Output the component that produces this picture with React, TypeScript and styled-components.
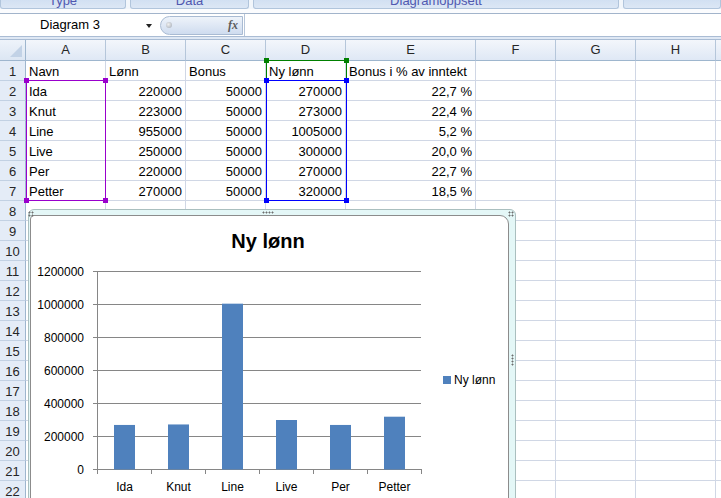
import React from 'react';
import styled, { createGlobalStyle } from 'styled-components';

const Global = createGlobalStyle`
  html, body { margin: 0; padding: 0; background: #fff; overflow: hidden; }
  body { width: 721px; height: 498px; font-family: "Liberation Sans", Arial, sans-serif; }
`;

const Page = styled.div`
  position: relative;
  width: 721px;
  height: 498px;
  overflow: hidden;
  background: #fff;
`;

/* ---------- ribbon remnant ---------- */
const Ribbon = styled.div`
  display: flex;
  gap: 4px;
  height: 9px;
  background: #f2f6fb;
`;

const RibbonGroup = styled.div<{ $w?: number }>`
  ${(p) => (p.$w ? `width: ${p.$w}px;` : 'flex: 1;')}
  box-sizing: border-box;
  height: 9px;
  overflow: hidden;
  background: linear-gradient(#d2e0f2, #dce7f5);
  border: 1px solid #b1c5dc;
  border-top: none;
  border-radius: 0 0 3px 3px;
  text-align: center;
  color: #5058b0;
  font-size: 13px;
`;

const RibbonLabel = styled.div`
  margin-top: -6px;
  line-height: 14px;
`;

const RibbonFoot = styled.div`
  height: 4px;
  background: #fbfcfe;
  border-bottom: 1px solid #a2b4cb;
`;

/* ---------- formula bar ---------- */
const FormulaBar = styled.div`
  display: flex;
  align-items: center;
  height: 22px;
  background: #fff;
  border-bottom: 1px solid #aabcd4;
`;

const NameBox = styled.div`
  position: relative;
  width: 156px;
  height: 22px;
  box-sizing: border-box;
  padding-left: 40px;
  font-size: 13px;
  line-height: 22px;
  color: #000;
`;

const DropArrow = styled.span`
  position: absolute;
  left: 146px;
  top: 10px;
  width: 0;
  height: 0;
  border-left: 3.5px solid transparent;
  border-right: 3.5px solid transparent;
  border-top: 4px solid #222;
`;

const FxPill = styled.div`
  position: relative;
  margin-left: 4px;
  width: 83px;
  height: 19px;
  box-sizing: border-box;
  border: 1px solid #a9bbd3;
  border-radius: 10px 0 0 10px;
  background: linear-gradient(#eef3fa, #cfdcef);
  display: flex;
  align-items: center;
  justify-content: space-between;
  padding: 0 4px 0 5px;
`;

const FxDot = styled.span`
  width: 6px;
  height: 6px;
  border-radius: 50%;
  background: radial-gradient(circle at 40% 40%, #f0f0f0, #a0a8b4);
`;

const FxText = styled.span`
  font-family: "Liberation Serif", "Times New Roman", serif;
  font-style: italic;
  font-weight: bold;
  font-size: 12px;
  color: #5d5d5d;
`;

const FormulaInput = styled.div`
  flex: 1;
  height: 22px;
  border-left: 1px solid #b7c6da;
  margin-left: 1px;
`;

const HeaderGap = styled.div`
  height: 2px;
  background: #dfe8f4;
  border-bottom: 1px solid #a9bcd4;
`;

/* ---------- sheet ---------- */
const Sheet = styled.div`
  display: grid;
  grid-template-columns: 26px 80px 80px 80px 80px 130px 80px 80px 80px 80px;
  grid-auto-rows: 20px;
  grid-template-rows: 21px;
  font-size: 13px;
`;

const Corner = styled.div`
  position: relative;
  box-sizing: border-box;
  background: linear-gradient(#eef3fa, #dce6f3);
  border-right: 1px solid #9eb6ce;
  border-bottom: 1px solid #9eb6ce;
  &::after {
    content: '';
    position: absolute;
    right: 3px;
    bottom: 3px;
    width: 0;
    height: 0;
    border-left: 12px solid transparent;
    border-bottom: 12px solid #c2d2e6;
  }
`;

const ColHead = styled.div`
  box-sizing: border-box;
  background: linear-gradient(#f3f6fb, #dfe8f5);
  border-right: 1px solid #b5c6da;
  border-bottom: 1px solid #9eb6ce;
  text-align: center;
  line-height: 20px;
  color: #262626;
`;

const RowHead = styled.div`
  box-sizing: border-box;
  background: #e4ecf7;
  border-right: 1px solid #9eb6ce;
  border-bottom: 1px solid #c2d1e3;
  text-align: center;
  line-height: 20px;
  padding-top: 1px;
  color: #262626;
`;

const Cell = styled.div<{ $right?: boolean }>`
  box-sizing: border-box;
  border-right: 1px solid #d0d7e5;
  border-bottom: 1px solid #d0d7e5;
  line-height: 20px;
  padding: 1px ${(p) => (p.$right ? '3px' : '2px')} 0 ${(p) => (p.$right ? '2px' : '3px')};
  text-align: ${(p) => (p.$right ? 'right' : 'left')};
  white-space: nowrap;
  overflow: visible;
  color: #000;
`;

/* ---------- range highlights (overlays) ---------- */
const RangeBox = styled.div<{ $c: string; $x: number; $y: number; $w: number; $h: number }>`
  position: absolute;
  left: ${(p) => p.$x}px;
  top: ${(p) => p.$y}px;
  width: ${(p) => p.$w}px;
  height: ${(p) => p.$h}px;
  box-sizing: border-box;
  border: 1px solid ${(p) => p.$c};
  pointer-events: none;
`;

const Handle = styled.span<{ $c: string; $pos: string }>`
  position: absolute;
  width: 5px;
  height: 5px;
  background: ${(p) => p.$c};
  ${(p) => (p.$pos.includes('t') ? 'top: -3px;' : 'bottom: -3px;')}
  ${(p) => (p.$pos.includes('l') ? 'left: -3px;' : 'right: -3px;')}
`;

/* ---------- chart ---------- */
const ChartFrame = styled.div`
  position: absolute;
  left: 28px;
  top: 209px;
  width: 488px;
  height: 310px;
  box-sizing: border-box;
  background: #e4f7f7;
  border: 1px solid #aabfbf;
  border-radius: 6px;
  padding: 5px 6px 0 1px;
`;

const ChartInner = styled.div`
  height: 100%;
  box-sizing: border-box;
  background: #fff;
  border: 1px solid #8c8c8c;
  border-radius: 4px 9px 0 0;
  display: flex;
  flex-direction: column;
`;

const ChartTitle = styled.div`
  margin-top: 13px;
  text-align: center;
  font-weight: bold;
  font-size: 20px;
  line-height: 24px;
  color: #000;
  padding-right: 3px;
`;

const ChartBody = styled.div`
  display: flex;
  align-items: flex-start;
`;

const Legend = styled.div`
  margin-left: 9px;
  margin-top: 119px;
  display: flex;
  align-items: center;
  gap: 3px;
  font-size: 12px;
  line-height: 16px;
  color: #000;
`;

const LegendKey = styled.span`
  width: 8px;
  height: 8px;
  background: #4f81bd;
`;

const Grip = styled.span<{ $x: number; $y: number; $w: number; $h: number }>`
  position: absolute;
  left: ${(p) => p.$x}px;
  top: ${(p) => p.$y}px;
  width: ${(p) => p.$w}px;
  height: ${(p) => p.$h}px;
  background-image: radial-gradient(circle, #6e6e6e 0.9px, transparent 1.1px);
  background-size: 3px 3px;
`;

const cols = ['A', 'B', 'C', 'D', 'E', 'F', 'G', 'H', ''];

type Row = [string, string, string, string, string];
const data: Row[] = [
  ['Navn', 'Lønn', 'Bonus', 'Ny lønn', 'Bonus i % av inntekt'],
  ['Ida', '220000', '50000', '270000', '22,7 %'],
  ['Knut', '223000', '50000', '273000', '22,4 %'],
  ['Line', '955000', '50000', '1005000', '5,2 %'],
  ['Live', '250000', '50000', '300000', '20,0 %'],
  ['Per', '220000', '50000', '270000', '22,7 %'],
  ['Petter', '270000', '50000', '320000', '18,5 %'],
];

const chartNames = ['Ida', 'Knut', 'Line', 'Live', 'Per', 'Petter'];
const chartValues = [270000, 273000, 1005000, 300000, 270000, 320000];

// SVG origin in page coordinates
const OX = 31;
const OY = 253;
const AX0 = 97 - OX;
const AX1 = 421 - OX;
const BASE = 469 - OY;
const SCALE = 198 / 1200000;
const CAT = 54;

const Plot: React.FC = () => {
  const ticks = [0, 200000, 400000, 600000, 800000, 1000000, 1200000];
  return (
    <svg width={403} height={260} style={{ display: 'block', flexShrink: 0 }}>
      {ticks.map((t) => {
        const y = BASE - t * SCALE + 0.5;
        return (
          <g key={t}>
            <line x1={AX0 - 4} x2={AX1} y1={y} y2={y} stroke="#868686" strokeWidth={1} />
            <text
              x={84 - OX}
              y={y + 4}
              textAnchor="end"
              fontSize={12}
              fontFamily='"Liberation Sans", Arial, sans-serif'
              fill="#000"
            >
              {t}
            </text>
          </g>
        );
      })}
      <line x1={AX0 + 0.5} x2={AX0 + 0.5} y1={BASE - 198} y2={BASE + 5} stroke="#868686" />
      {chartNames.map((n, i) => {
        const x = AX0 + CAT * (i + 1) + 0.5;
        return <line key={'t' + n} x1={x} x2={x} y1={BASE} y2={BASE + 5} stroke="#868686" />;
      })}
      {chartValues.map((v, i) => {
        const h = v * SCALE;
        return (
          <rect
            key={'b' + i}
            x={AX0 + CAT * i + 17}
            y={BASE - h + 0.5}
            width={21}
            height={h}
            fill="#4f81bd"
          />
        );
      })}
      {chartNames.map((n, i) => (
        <text
          key={'l' + n}
          x={AX0 + CAT * i + 27.5}
          y={491 - OY}
          textAnchor="middle"
          fontSize={12}
          fontFamily='"Liberation Sans", Arial, sans-serif'
          fill="#000"
        >
          {n}
        </text>
      ))}
    </svg>
  );
};

export default function App() {
  const rows: React.ReactNode[] = [];
  for (let r = 1; r <= 22; r++) {
    const d = data[r - 1];
    rows.push(<RowHead key={'rh' + r}>{r}</RowHead>);
    for (let c = 0; c < 9; c++) {
      const v = d && c < 5 ? d[c] : '';
      const right = r > 1 && c > 0 && c < 5;
      rows.push(
        <Cell key={`c${r}-${c}`} $right={right}>
          {v}
        </Cell>
      );
    }
  }

  return (
    <Page>
      <Global />
      <Ribbon>
        <RibbonGroup $w={126}>
          <RibbonLabel>Type</RibbonLabel>
        </RibbonGroup>
        <RibbonGroup $w={119}>
          <RibbonLabel>Data</RibbonLabel>
        </RibbonGroup>
        <RibbonGroup $w={366}>
          <RibbonLabel>Diagramoppsett</RibbonLabel>
        </RibbonGroup>
        <RibbonGroup />
      </Ribbon>
      <RibbonFoot />
      <FormulaBar>
        <NameBox>
          Diagram 3
          <DropArrow />
        </NameBox>
        <FxPill>
          <FxDot />
          <FxText>fx</FxText>
        </FxPill>
        <FormulaInput />
      </FormulaBar>
      <HeaderGap />
      <Sheet>
        <Corner />
        {cols.map((c, i) => (
          <ColHead key={'h' + i}>{c}</ColHead>
        ))}
        {rows}
      </Sheet>

      <RangeBox $c="#9900cc" $x={26} $y={80} $w={80} $h={121}>
        <Handle $c="#9900cc" $pos="tl" />
        <Handle $c="#9900cc" $pos="tr" />
        <Handle $c="#9900cc" $pos="bl" />
        <Handle $c="#9900cc" $pos="br" />
      </RangeBox>
      <RangeBox $c="#008000" $x={266} $y={60} $w={81} $h={21}>
        <Handle $c="#008000" $pos="tl" />
        <Handle $c="#008000" $pos="tr" />
      </RangeBox>
      <RangeBox $c="#0000ff" $x={266} $y={80} $w={81} $h={121}>
        <Handle $c="#0000ff" $pos="tl" />
        <Handle $c="#0000ff" $pos="tr" />
        <Handle $c="#0000ff" $pos="bl" />
        <Handle $c="#0000ff" $pos="br" />
      </RangeBox>

      <ChartFrame>
        <ChartInner>
          <ChartTitle>Ny lønn</ChartTitle>
          <ChartBody>
            <Plot />
            <Legend>
              <LegendKey />
              Ny lønn
            </Legend>
          </ChartBody>
        </ChartInner>
      </ChartFrame>
      <Grip $x={28} $y={211} $w={6} $h={6} />
      <Grip $x={262} $y={211} $w={12} $h={3} />
      <Grip $x={508} $y={211} $w={6} $h={6} />
      <Grip $x={511} $y={354} $w={3} $h={12} />
    </Page>
  );
}
